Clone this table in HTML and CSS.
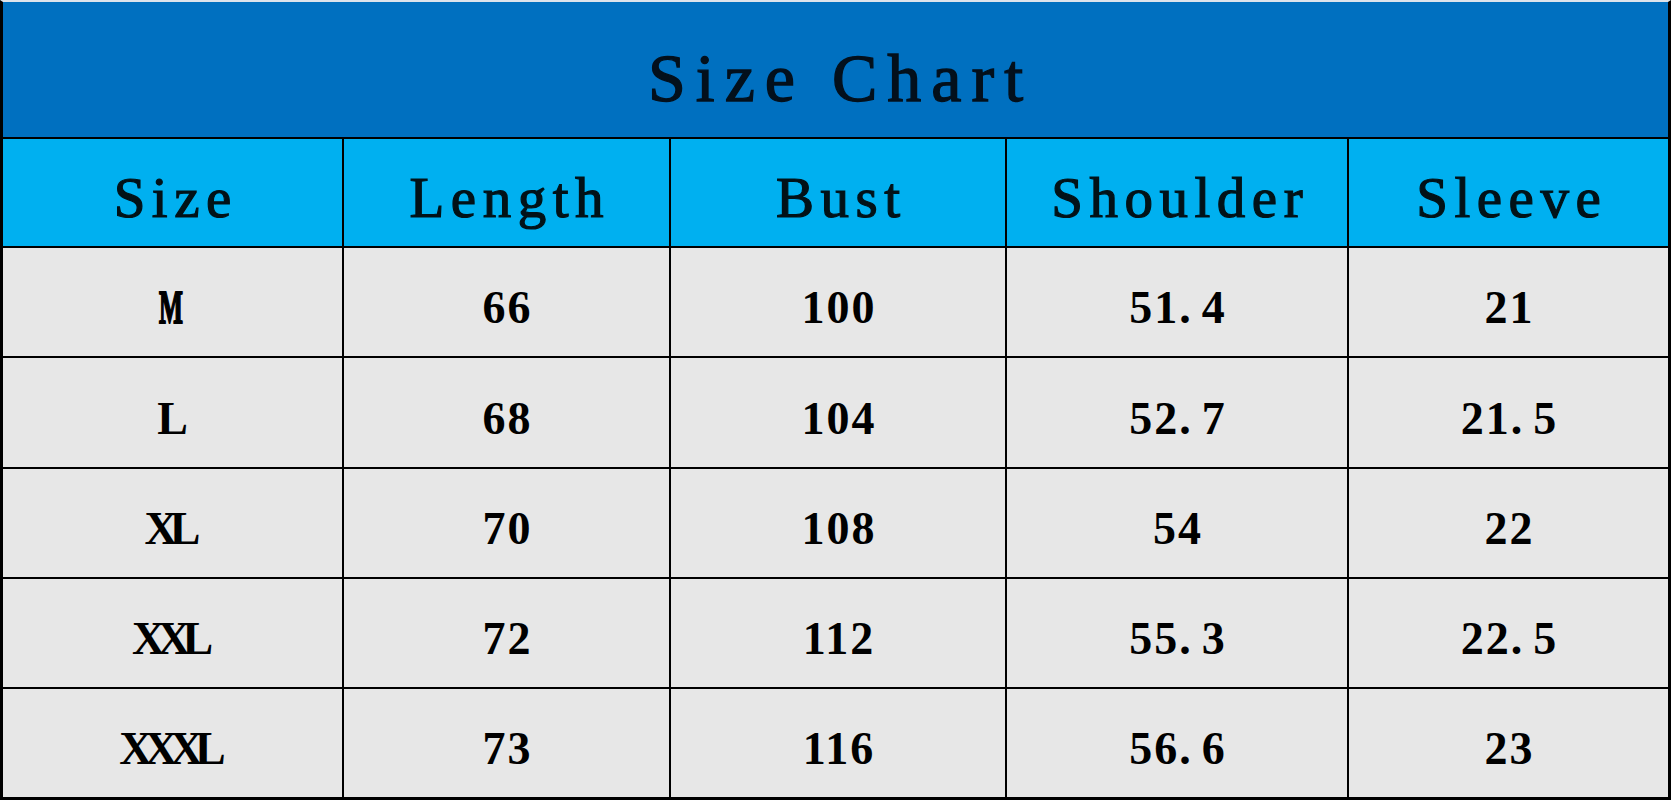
FILE: index.html
```html
<!DOCTYPE html>
<html lang="en">
<head>
<meta charset="utf-8">
<title>Size Chart</title>
<link rel="stylesheet" href="styles.css">
</head>
<body>
<div class="chart">
  <div class="title"><span class="t">Size Chart</span></div>
  <div class="head"><span class="t">Size</span></div>
  <div class="head"><span class="t">Length</span></div>
  <div class="head"><span class="t">Bust</span></div>
  <div class="head"><span class="t">Shoulder</span></div>
  <div class="head"><span class="t">Sleeve</span></div>

  <div class="cell"><span class="t sz m">M</span></div>
  <div class="cell"><span class="t">66</span></div>
  <div class="cell"><span class="t">100</span></div>
  <div class="cell"><span class="t">51<span class="dot">.</span>4</span></div>
  <div class="cell"><span class="t">21</span></div>

  <div class="cell"><span class="t sz">L</span></div>
  <div class="cell"><span class="t">68</span></div>
  <div class="cell"><span class="t">104</span></div>
  <div class="cell"><span class="t">52<span class="dot">.</span>7</span></div>
  <div class="cell"><span class="t">21<span class="dot">.</span>5</span></div>

  <div class="cell"><span class="t sz">XL</span></div>
  <div class="cell"><span class="t">70</span></div>
  <div class="cell"><span class="t">108</span></div>
  <div class="cell"><span class="t">54</span></div>
  <div class="cell"><span class="t">22</span></div>

  <div class="cell"><span class="t sz">XXL</span></div>
  <div class="cell"><span class="t">72</span></div>
  <div class="cell"><span class="t">112</span></div>
  <div class="cell"><span class="t">55<span class="dot">.</span>3</span></div>
  <div class="cell"><span class="t">22<span class="dot">.</span>5</span></div>

  <div class="cell"><span class="t sz">XXXL</span></div>
  <div class="cell"><span class="t">73</span></div>
  <div class="cell"><span class="t">116</span></div>
  <div class="cell"><span class="t">56<span class="dot">.</span>6</span></div>
  <div class="cell"><span class="t">23</span></div>
</div>
</body>
</html>
```
FILE: styles.css
```css
html, body {
  margin: 0;
  padding: 0;
  background: #ffffff;
}

.chart {
  width: 1671px;
  height: 800px;
  box-sizing: border-box;
  border-top: 2px solid #dde4ec;
  border-left: 3px solid #000;
  border-right: 3px solid #000;
  border-bottom: 3px solid #000;
  background: #000;
  display: grid;
  grid-template-columns: 339px 325px 334px 340px 319px;
  grid-template-rows: 135px 107px 108px 109px 108px 108px 108px;
  gap: 2px;
  font-family: "Liberation Serif", "Times New Roman", serif;
  overflow: hidden;
}

.title,
.head,
.cell {
  display: flex;
  align-items: center;
  justify-content: center;
  box-sizing: border-box;
}

.t {
  display: inline-block;
  line-height: 1;
  white-space: pre;
}

.title {
  grid-column: 1 / -1;
  background: #0070c0;
  padding-top: 16px;
  color: #03101c;
  font-size: 68px;
  letter-spacing: 10px;
  -webkit-text-stroke: 1.3px #03101c;
}

.title .t {
  margin-right: -10px;
}

.head {
  background: #00b0f0;
  padding-top: 10px;
  color: #021218;
  font-size: 57px;
  letter-spacing: 6.5px;
  -webkit-text-stroke: 1.2px #021218;
}

.head .t {
  margin-right: -6.5px;
}

.cell {
  background: #e7e7e7;
  padding-top: 12px;
  color: #000;
  font-size: 46px;
  font-weight: bold;
  letter-spacing: 2px;
}

.cell .t {
  margin-right: -2px;
}

.cell .dot {
  margin-right: 9px;
}

.cell .sz {
  letter-spacing: -8px;
  margin-right: 8px;
}

.cell .m {
  transform: scaleX(0.55);
  -webkit-text-stroke: 2px #000;
}
```
